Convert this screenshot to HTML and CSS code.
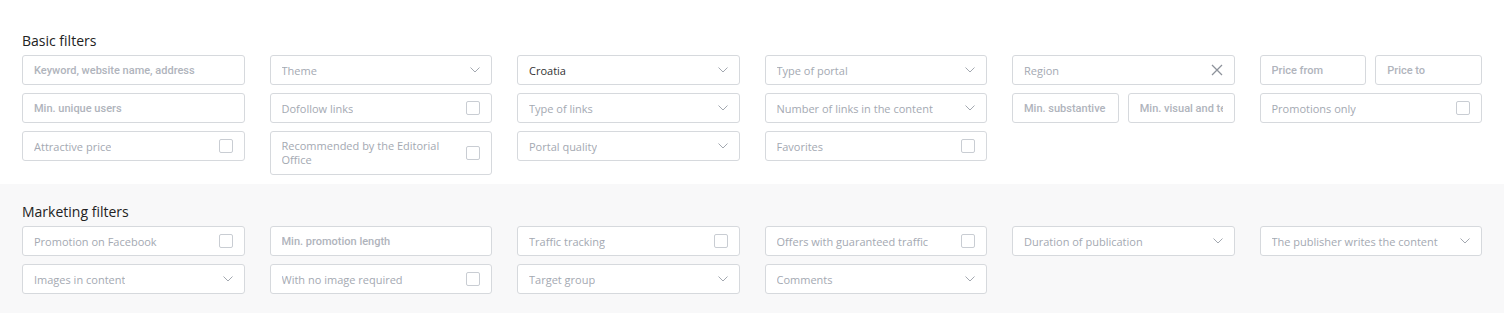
FILE: index.html
```html
<!DOCTYPE html>
<html lang="en">
<head>
  <meta charset="UTF-8">
  <title>Filters</title>
  <link rel="stylesheet" href="styles.css">
</head>
<body>

  <section class="filters basic">
    <h2>Basic filters</h2>
    <div class="filter-grid">
      <input class="field text-input" type="text" placeholder="Keyword, website name, address">
      <div class="field select"><span>Theme</span><svg class="chev" viewBox="0 0 10 6"><polyline points="0.5,0.5 5,5 9.5,0.5"/></svg></div>
      <div class="field select filled"><span>Croatia</span><svg class="chev" viewBox="0 0 10 6"><polyline points="0.5,0.5 5,5 9.5,0.5"/></svg></div>
      <div class="field select"><span>Type of portal</span><svg class="chev" viewBox="0 0 10 6"><polyline points="0.5,0.5 5,5 9.5,0.5"/></svg></div>
      <div class="field select"><span>Region</span><svg class="clear" viewBox="0 0 12 12"><path d="M1 1 L11 11 M11 1 L1 11"/></svg></div>
      <div class="pair">
        <input class="field text-input" type="text" placeholder="Price from">
        <input class="field text-input" type="text" placeholder="Price to">
      </div>

      <input class="field text-input" type="text" placeholder="Min. unique users">
      <label class="field check"><span>Dofollow links</span><i class="box"></i></label>
      <div class="field select"><span>Type of links</span><svg class="chev" viewBox="0 0 10 6"><polyline points="0.5,0.5 5,5 9.5,0.5"/></svg></div>
      <div class="field select"><span>Number of links in the content</span><svg class="chev" viewBox="0 0 10 6"><polyline points="0.5,0.5 5,5 9.5,0.5"/></svg></div>
      <div class="pair">
        <input class="field text-input" type="text" placeholder="Min. substantive">
        <input class="field text-input" type="text" placeholder="Min. visual and text">
      </div>
      <label class="field check"><span>Promotions only</span><i class="box"></i></label>

      <label class="field check"><span>Attractive price</span><i class="box"></i></label>
      <label class="field check tall"><span>Recommended by the Editorial Office</span><i class="box"></i></label>
      <div class="field select"><span>Portal quality</span><svg class="chev" viewBox="0 0 10 6"><polyline points="0.5,0.5 5,5 9.5,0.5"/></svg></div>
      <label class="field check"><span>Favorites</span><i class="box"></i></label>
    </div>
  </section>

  <section class="filters marketing">
    <h2>Marketing filters</h2>
    <div class="filter-grid">
      <label class="field check"><span>Promotion on Facebook</span><i class="box"></i></label>
      <input class="field text-input" type="text" placeholder="Min. promotion length">
      <label class="field check"><span>Traffic tracking</span><i class="box"></i></label>
      <label class="field check"><span>Offers with guaranteed traffic</span><i class="box"></i></label>
      <div class="field select"><span>Duration of publication</span><svg class="chev" viewBox="0 0 10 6"><polyline points="0.5,0.5 5,5 9.5,0.5"/></svg></div>
      <div class="field select"><span>The publisher writes the content</span><svg class="chev" viewBox="0 0 10 6"><polyline points="0.5,0.5 5,5 9.5,0.5"/></svg></div>

      <div class="field select"><span>Images in content</span><svg class="chev" viewBox="0 0 10 6"><polyline points="0.5,0.5 5,5 9.5,0.5"/></svg></div>
      <label class="field check"><span>With no image required</span><i class="box"></i></label>
      <div class="field select"><span>Target group</span><svg class="chev" viewBox="0 0 10 6"><polyline points="0.5,0.5 5,5 9.5,0.5"/></svg></div>
      <div class="field select"><span>Comments</span><svg class="chev" viewBox="0 0 10 6"><polyline points="0.5,0.5 5,5 9.5,0.5"/></svg></div>
    </div>
  </section>

</body>
</html>
```

FILE: styles.css
```css
body {
  margin: 0;
  font-family: "Open Sans", Arial, sans-serif;
  background-color: #fff;
}

.filters {
  padding: 31px 22px 9px;
}

.filters.marketing {
  background-color: #f8f8f9;
  padding-top: 18px;
  padding-bottom: 19px;
}

.filters h2 {
  margin: 0 0 4px;
  font-size: 14px;
  line-height: 20px;
  font-weight: 500;
  color: #222;
}

.filter-grid {
  display: grid;
  grid-template-columns: repeat(6, 1fr);
  column-gap: 25px;
  row-gap: 8px;
  align-items: start;
}

.pair {
  display: grid;
  grid-template-columns: 1fr 1fr;
  column-gap: 9px;
}

.field {
  box-sizing: border-box;
  height: 30px;
  width: 100%;
  min-width: 0;
  margin: 0;
  border: 1px solid #d6d9dd;
  border-radius: 3px;
  background-color: #fff;
  display: flex;
  align-items: center;
  justify-content: space-between;
  padding: 0 11px 0 11px;
  font-size: 11px;
  color: #a4a9b2;
}

.field span {
  white-space: nowrap;
  overflow: hidden;
}

.field.filled span {
  color: #333;
}

.text-input {
  display: block;
  font-family: Roboto, "Liberation Sans", Arial, sans-serif;
  font-size: 11px;
  font-weight: 500;
  color: #333;
  outline: none;
}

.text-input::placeholder {
  color: #b0b4bc;
}

.chev {
  width: 10px;
  height: 6px;
  flex-shrink: 0;
}

.chev polyline {
  fill: none;
  stroke: #a3a8b0;
  stroke-width: 1;
}

.clear {
  width: 12px;
  height: 12px;
  flex-shrink: 0;
}

.clear path {
  fill: none;
  stroke: #8d929b;
  stroke-width: 1.3;
}

.check .box {
  box-sizing: border-box;
  width: 14px;
  height: 14px;
  flex-shrink: 0;
  border: 1px solid #c9cdd3;
  border-radius: 2px;
  background: #fff;
}

.check.tall {
  height: 44px;
}

.check.tall span {
  white-space: normal;
  line-height: 14px;
  padding-right: 20px;
}
```
